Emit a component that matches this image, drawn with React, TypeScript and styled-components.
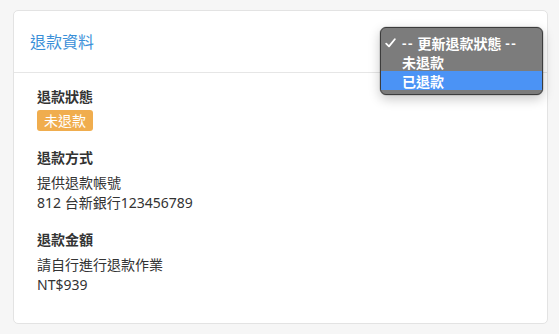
import React from "react";
import styled, { createGlobalStyle } from "styled-components";

const Global = createGlobalStyle`
  html, body { margin: 0; padding: 0; background: #f6f6f6; }
  body {
    font-family: "Noto Sans", "Noto Sans CJK TC", sans-serif;
    color: #333;
    -webkit-font-smoothing: antialiased;
  }
`;

const Page = styled.div`
  padding: 10px 11px 10px 13px;
  width: 559px;
  height: 334px;
  box-sizing: border-box;
`;

const Card = styled.section`
  position: relative;
  background: #fff;
  border: 1px solid #e3e3e3;
  border-radius: 5px;
  height: 314px;
  box-sizing: border-box;
`;

const Header = styled.header`
  display: flex;
  align-items: center;
  justify-content: space-between;
  height: 61px;
  padding: 0 16px;
  border-bottom: 1px solid #e6e6e6;
`;

const Title = styled.h3`
  margin: 0;
  font-size: 16px;
  font-weight: 400;
  color: #3a8fd8;
  line-height: 22px;
`;

const Body = styled.div`
  display: flex;
  flex-direction: column;
  gap: 17px;
  padding: 14px 23px;
`;

const Field = styled.div`
  display: flex;
  flex-direction: column;
  align-items: flex-start;
`;

const Label = styled.div`
  font-size: 14px;
  font-weight: 700;
  line-height: 20px;
  color: #333;
  margin-bottom: 5px;
`;

const Line = styled.div`
  font-size: 14px;
  line-height: 20px;
  color: #333;
`;

const Badge = styled.span<{ $bg: string }>`
  display: inline-flex;
  align-items: center;
  height: 21px;
  padding: 0 7px;
  border-radius: 3px;
  background: ${(p) => p.$bg};
  color: #fff;
  font-size: 14px;
  line-height: 21px;
  margin-top: -2px;
`;

const Popup = styled.ul`
  position: absolute;
  left: 366px;
  top: 16px;
  width: 163px;
  margin: 0;
  padding: 5px 0 4px;
  list-style: none;
  box-sizing: border-box;
  background: #7c7c7c;
  border: 1px solid #3c3c3c;
  border-radius: 6px;
  box-shadow: 0 4px 12px rgba(0, 0, 0, 0.22), 0 0 0 0.5px rgba(0, 0, 0, 0.2);
  font-family: "Noto Sans", "Noto Sans CJK TC", sans-serif;
`;

const Option = styled.li<{ $active?: boolean }>`
  display: flex;
  align-items: center;
  height: 19px;
  padding-left: 4px;
  font-size: 14px;
  font-weight: 600;
  color: #fff;
  white-space: pre;
  background: ${(p) => (p.$active ? "#4b93f5" : "transparent")};
`;

const Dash = styled.span`
  letter-spacing: 1.5px;
`;

const Check = styled.span`
  width: 17px;
  display: inline-flex;
  align-items: center;
`;

const CheckIcon = () => (
  <svg width="11" height="10" viewBox="0 0 11 10">
    <path
      d="M1.2 5.6 L4 8.4 L9.8 1.2"
      fill="none"
      stroke="#fff"
      strokeWidth="1.8"
      strokeLinecap="round"
      strokeLinejoin="round"
    />
  </svg>
);

export default function App() {
  return (
    <>
      <Global />
      <Page>
        <Card>
          <Header>
            <Title>退款資料</Title>
          </Header>
          <Body>
            <Field>
              <Label>退款狀態</Label>
              <Badge $bg="#f0ad4e">未退款</Badge>
            </Field>
            <Field>
              <Label>退款方式</Label>
              <Line>提供退款帳號</Line>
              <Line>812 台新銀行123456789</Line>
            </Field>
            <Field>
              <Label>退款金額</Label>
              <Line>請自行進行退款作業</Line>
              <Line>NT$939</Line>
            </Field>
          </Body>
          <Popup>
            <Option>
              <Check>
                <CheckIcon />
              </Check>
              <Dash>--</Dash> 更新退款狀態 <Dash>--</Dash>
            </Option>
            <Option>
              <Check />
              未退款
            </Option>
            <Option $active>
              <Check />
              已退款
            </Option>
          </Popup>
        </Card>
      </Page>
    </>
  );
}
